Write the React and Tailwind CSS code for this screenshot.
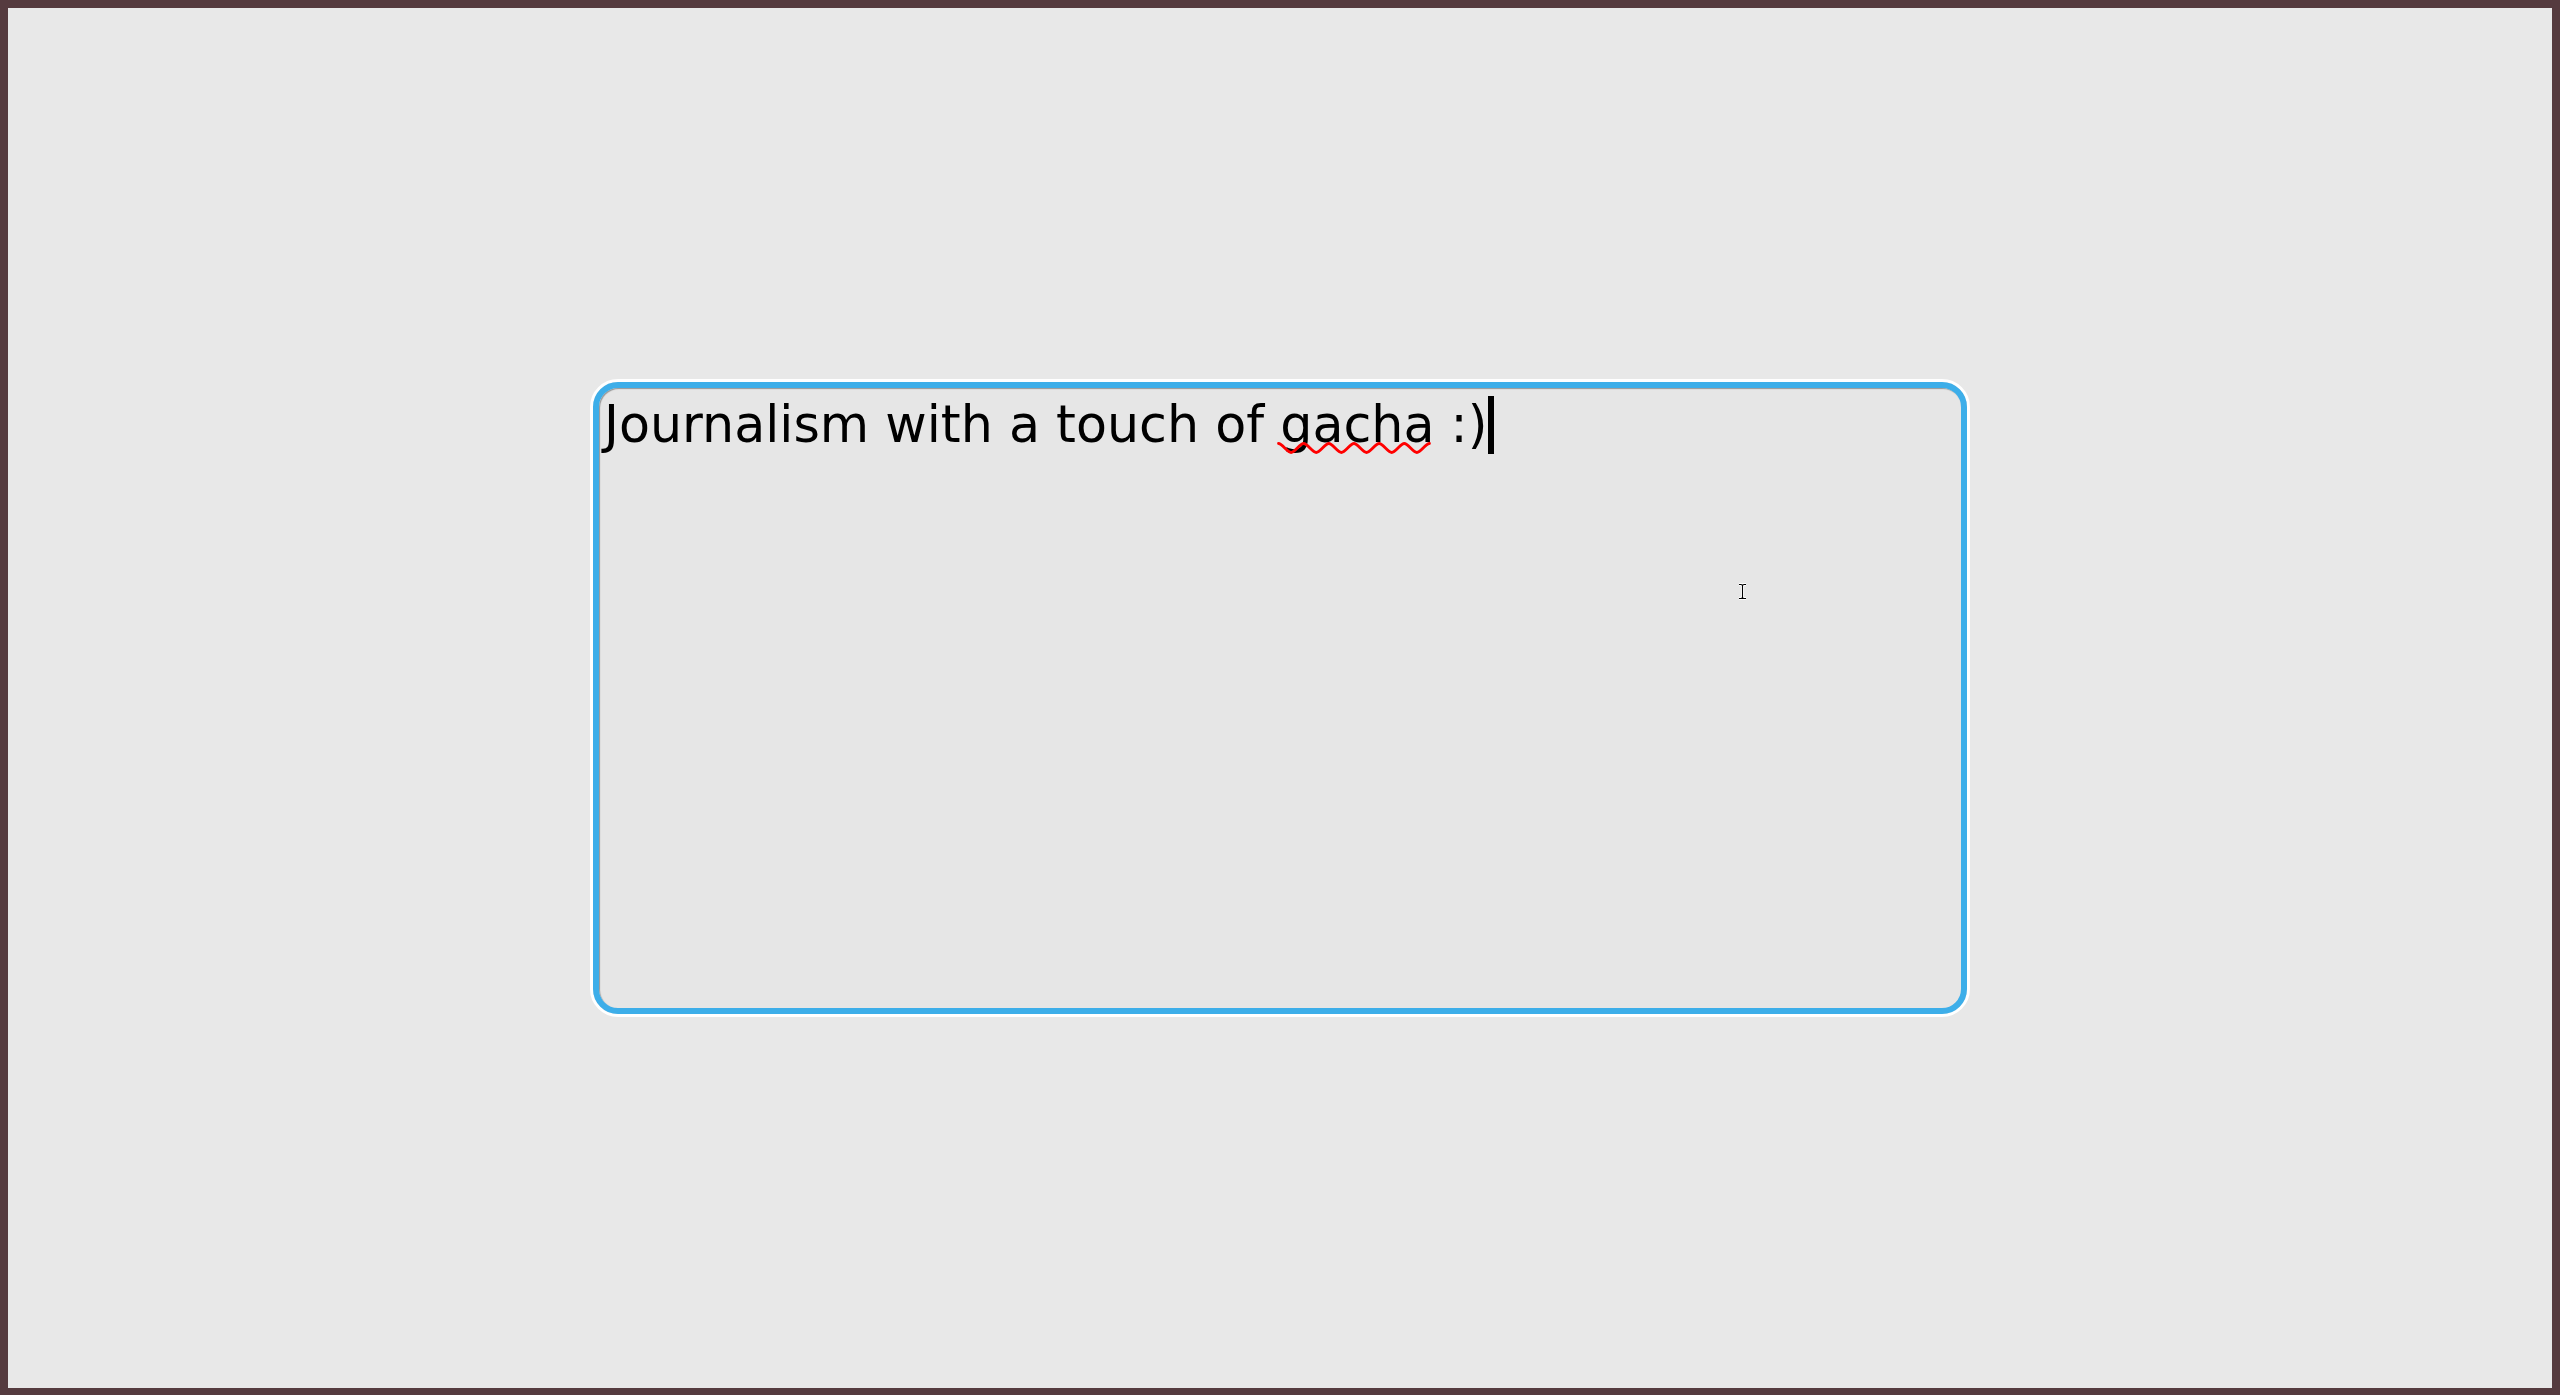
import React from 'react';

function IBeam() {
  return (
    <svg width="9" height="17" viewBox="0 0 9 17" className="absolute left-[1730px] top-[575px]">
      <path d="M1 1.5h2c0.9 0 1.5 0.6 1.5 1.4v11.2c0 0.8 -0.6 1.4 -1.5 1.4h-2M8 1.5h-2c-0.9 0 -1.5 0.6 -1.5 1.4M8 15.5h-2c-0.9 0 -1.5 -0.6 -1.5 -1.4" fill="none" stroke="#fff" strokeWidth="3" />
      <path d="M1 1.5h2c0.9 0 1.5 0.6 1.5 1.4v11.2c0 0.8 -0.6 1.4 -1.5 1.4h-2M8 1.5h-2c-0.9 0 -1.5 0.6 -1.5 1.4M8 15.5h-2c-0.9 0 -1.5 -0.6 -1.5 -1.4" fill="none" stroke="#000" strokeWidth="1.1" />
    </svg>
  );
}

// spell-check wave under a word: 12 half waves
function Squiggle() {
  const h = 12.58;
  let d = 'M1.5 1.5';
  for (let i = 0; i < 12; i++) {
    const x0 = 1.5 + i * h;
    const from = i % 2 === 0 ? 1.5 : 10.5;
    const to = i % 2 === 0 ? 10.5 : 1.5;
    d += ` C${(x0 + h * 0.3).toFixed(2)} ${from} ${(x0 + h * 0.7).toFixed(2)} ${to} ${(x0 + h).toFixed(2)} ${to}`;
  }
  return (
    <svg width="156" height="13" viewBox="0 0 156 13" className="absolute left-[-3px] top-[47px]">
      <path d={d} fill="none" stroke="#ff0000" strokeWidth="2.8" strokeLinecap="round" />
    </svg>
  );
}

export default function App() {
  return (
    <div className="relative w-full h-[1395px] border-8 border-b-[7px] border-[#553b3f] bg-[#e8e8e8] flex items-center justify-center">
      {/* focused text field */}
      <div className="w-[1380px] h-[638px] rounded-[28px] border-[3px] border-white">
        <div className="w-full h-full rounded-[25px] border-[6px] border-[#3daee9] bg-[#e6e6e6] shadow-[inset_1px_1px_1px_rgba(0,0,0,0.35)] pl-[5px] pt-[8px]">
          <p className="font-['DejaVu_Sans',sans-serif] text-[50.7px] leading-[58px] text-black whitespace-pre">
            Journalism with a touch of{' '}
            <span className="relative">
              gacha
              <Squiggle />
            </span>
            {' :)'}
            <span className="inline-block w-[6px] h-[58px] bg-black align-[-12px] ml-[1px]" />
          </p>
        </div>
      </div>
      <IBeam />
    </div>
  );
}
